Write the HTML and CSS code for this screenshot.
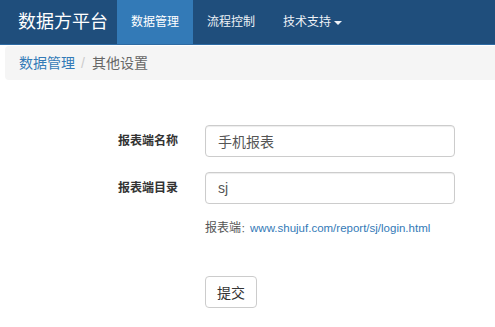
FILE: index.html
```html
<!DOCTYPE html>
<html lang="zh-CN">
<head>
    <meta charset="UTF-8">
    <meta name="viewport" content="width=device-width, initial-scale=1.0">
    <title>数据方平台 - 其他设置</title>
    <link rel="stylesheet" href="styles.css">
</head>
<body>
    <nav class="navbar">
        <a class="brand" href="#">数据方平台</a>
        <ul class="nav">
            <li class="active"><a href="#">数据管理</a></li>
            <li><a href="#">流程控制</a></li>
            <li><a href="#">技术支持<span class="caret"></span></a></li>
        </ul>
    </nav>

    <ol class="breadcrumb">
        <li><a href="#">数据管理</a></li>
        <li class="current">其他设置</li>
    </ol>

    <form class="settings">
        <label class="label" for="name">报表端名称</label>
        <input class="field" id="name" type="text" value="手机报表">

        <label class="label" for="dir">报表端目录</label>
        <input class="field" id="dir" type="text" value="sj">

        <p class="help">报表端<span class="colon">：</span><a href="#">www.shujuf.com/report/sj/login.html</a></p>

        <button class="btn" type="button">提交</button>
    </form>
</body>
</html>
```

FILE: styles.css
```css
body {
    margin: 0;
    font-family: "Liberation Sans", "Noto Sans CJK SC", sans-serif;
    font-size: 14px;
    color: #333;
    background-color: white;
    overflow: hidden;
}
a {
    text-decoration: none;
}
.navbar {
    display: flex;
    height: 44px;
    background-color: #1f4e7c;
    border-bottom: 1px solid #2e6ba3;
}
.brand {
    width: 117px;
    box-sizing: border-box;
    padding-left: 18px;
    line-height: 44px;
    font-size: 18px;
    color: #fff;
}
.nav {
    display: flex;
    list-style: none;
    margin: 0;
    padding: 0;
}
.nav a {
    display: block;
    padding: 0 14px;
    line-height: 44px;
    font-size: 12px;
    color: #eef2f7;
}
.nav .active a {
    background-color: #337ab7;
    color: #fff;
}
.caret {
    display: inline-block;
    margin-left: 3px;
    vertical-align: middle;
    border-top: 4px solid #eef2f7;
    border-left: 4px solid transparent;
    border-right: 4px solid transparent;
}
.breadcrumb {
    display: flex;
    list-style: none;
    margin: 1px -20px 0 5px;
    padding: 0 14px;
    line-height: 34px;
    background-color: #f5f5f5;
    border-radius: 4px;
}
.breadcrumb a {
    color: #337ab7;
}
.breadcrumb .current {
    color: #666;
}
.breadcrumb .current::before {
    content: "/";
    padding: 0 7px 0 6px;
    color: #ccc;
}
.settings {
    display: grid;
    grid-template-columns: 178px 250px;
    column-gap: 27px;
    row-gap: 15px;
    margin: 0;
    padding-top: 45px;
}
.label {
    line-height: 32px;
    text-align: right;
    font-size: 12px;
    font-weight: bold;
    color: #333;
}
.field {
    height: 32px;
    box-sizing: border-box;
    padding: 0 12px;
    border: 1px solid #ccc;
    border-radius: 4px;
    font-family: inherit;
    font-size: 14px;
    color: #555;
    box-shadow: inset 0 1px 1px rgba(0,0,0,0.075);
}
.help {
    grid-column: 2;
    margin: 0;
    line-height: 18px;
    font-size: 12px;
    color: #555;
    white-space: nowrap;
}
.colon {
    font-family: "Noto Sans CJK TC", sans-serif;
    font-size: 9px;
}
.help a {
    font-size: 11.5px;
    color: #337ab7;
}
.btn {
    grid-column: 2;
    justify-self: start;
    margin-top: 23px;
    height: 32px;
    padding: 0 11px;
    border: 1px solid #ccc;
    border-radius: 4px;
    background-color: #fff;
    font-family: inherit;
    font-size: 14px;
    color: #333;
}
```
